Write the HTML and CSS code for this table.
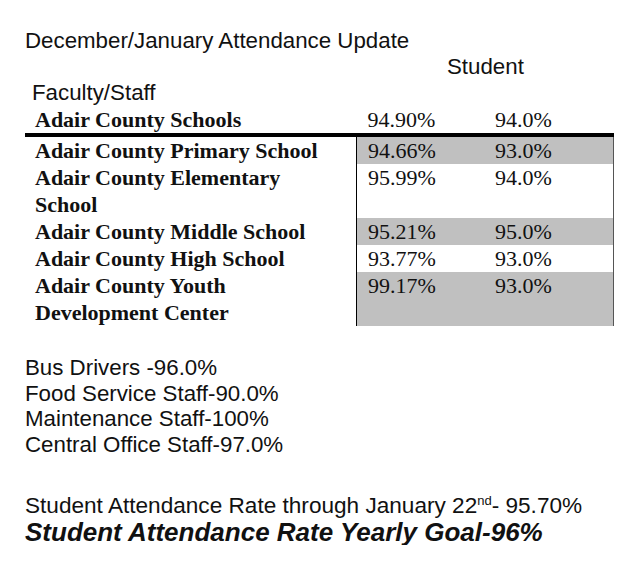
FILE: index.html
```html
<!DOCTYPE html>
<html>
<head>
<meta charset="utf-8">
<link rel="stylesheet" href="styles.css">
</head>
<body>
<div class="page">
  <div class="title">December/January Attendance Update</div>
  <div class="student-head">Student</div>
  <div class="faculty-head">Faculty/Staff</div>
  <table class="att">
    <tr class="head">
      <td class="name">Adair County Schools</td>
      <td class="n1">94.90%</td>
      <td class="n2">94.0%</td>
    </tr>
    <tr class="gray">
      <td class="name">Adair County Primary School</td>
      <td class="n1 v">94.66%</td>
      <td class="n2 r">93.0%</td>
    </tr>
    <tr>
      <td class="name">Adair County Elementary<br>School</td>
      <td class="n1 v">95.99%</td>
      <td class="n2 r">94.0%</td>
    </tr>
    <tr class="gray">
      <td class="name">Adair County Middle School</td>
      <td class="n1 v">95.21%</td>
      <td class="n2 r">95.0%</td>
    </tr>
    <tr>
      <td class="name">Adair County High School</td>
      <td class="n1 v">93.77%</td>
      <td class="n2 r">93.0%</td>
    </tr>
    <tr class="gray">
      <td class="name">Adair County Youth<br>Development Center</td>
      <td class="n1 v">99.17%</td>
      <td class="n2 r">93.0%</td>
    </tr>
  </table>
  <div class="staff">
    <div>Bus Drivers -96.0%</div>
    <div>Food Service Staff-90.0%</div>
    <div>Maintenance Staff-100%</div>
    <div>Central Office Staff-97.0%</div>
  </div>
  <div class="rate">Student Attendance Rate through January 22<sup>nd</sup>- 95.70%</div>
  <div class="goal">Student Attendance Rate Yearly Goal-96%</div>
</div>
</body>
</html>
```

FILE: styles.css
```css
html, body {
  margin: 0;
  padding: 0;
  background: #ffffff;
}
.page {
  padding: 28px 0 0 25px;
  font-family: "Liberation Sans", Arial, sans-serif;
  font-size: 22.3px;
  color: #111;
}
.title {
  line-height: 26px;
}
.student-head {
  line-height: 26px;
  padding-left: 422px;
}
.faculty-head {
  line-height: 26px;
  padding-left: 7px;
}
.att {
  border-collapse: collapse;
  width: 589px;
  font-family: "Liberation Serif", "Times New Roman", serif;
  font-size: 22px;
  color: #111;
}
.att td {
  padding: 0;
  line-height: 27px;
  vertical-align: top;
  white-space: nowrap;
}
.att .name {
  width: 321px;
  padding-left: 10px;
  font-weight: bold;
}
.att .n1 {
  width: 116px;
  padding-left: 11px;
}
.att .n2 {
  padding-left: 11px;
}
.att .head td {
  border-bottom: 4px solid #000;
}
.att .v {
  border-left: 1px solid #000;
}
.att .r {
  border-right: 1px solid #555;
}
.att .gray .v,
.att .gray .r {
  background: #c0c0c0;
}
.staff {
  margin-top: 29px;
  line-height: 25.5px;
}
.rate {
  margin-top: 36px;
  line-height: 26px;
  font-size: 22.6px;
}
.rate sup {
  font-size: 13px;
  line-height: 0;
  vertical-align: 8px;
}
.goal {
  font-size: 26px;
  font-weight: bold;
  font-style: italic;
  line-height: 26px;
}
```
